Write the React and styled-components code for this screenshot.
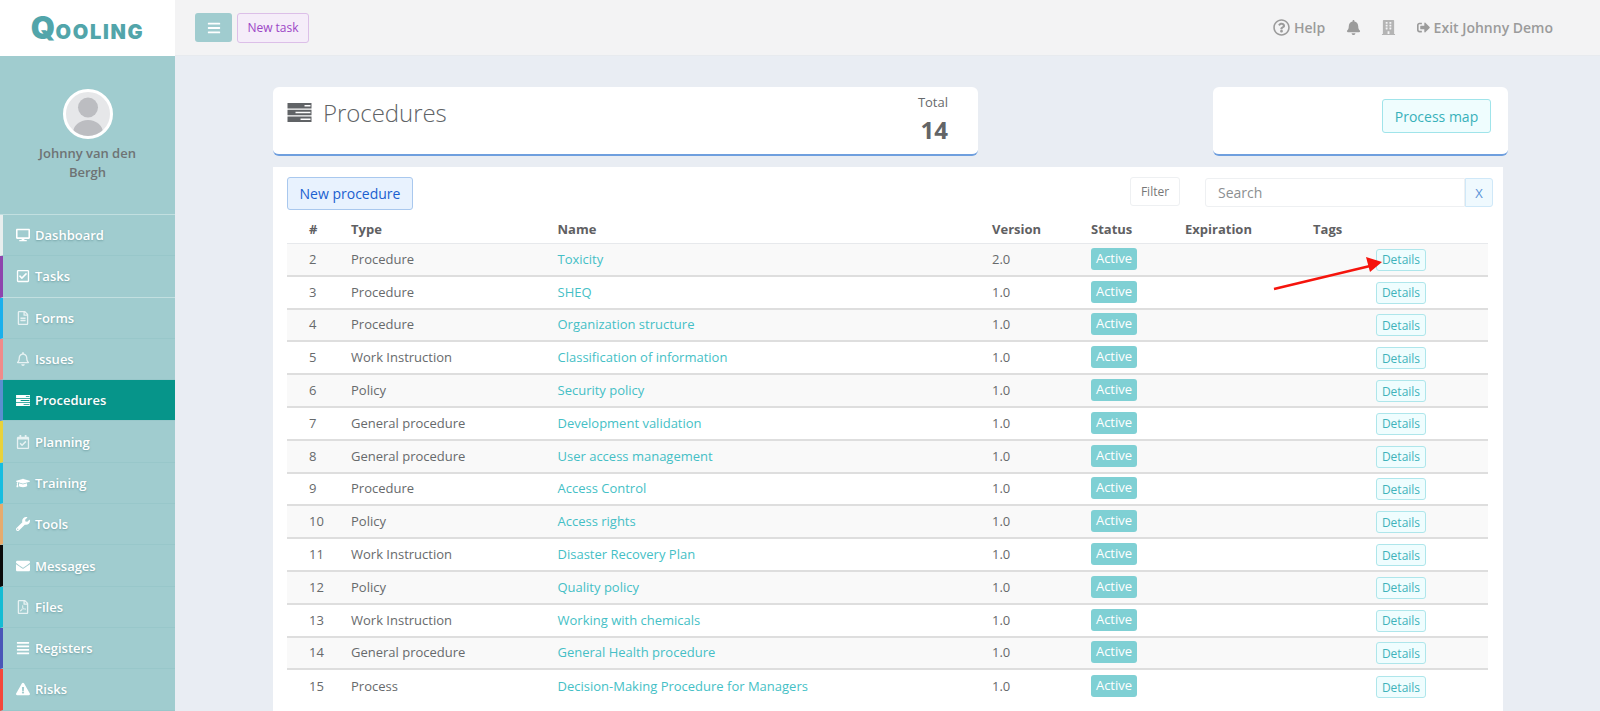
import styled, {createGlobalStyle} from 'styled-components'
import {
    FaDesktop, FaRegCheckSquare, FaRegFileAlt, FaRegBell, FaRegCalendarCheck,
    FaGraduationCap, FaWrench, FaEnvelope, FaRegFilePdf, FaAlignJustify, FaExclamationTriangle,
    FaRegQuestionCircle, FaBell, FaBuilding, FaSignOutAlt, FaBars
} from 'react-icons/fa'

const GlobalStyle = createGlobalStyle`
    html, body {
        margin: 0;
        height: 100%;
        overflow: hidden;
        background: #e9edf3;
        font-family: "Open Sans", sans-serif;
        font-size: 13px;
        color: #676a6c;
    }
    * { box-sizing: border-box; }
`

const Page = styled.div`
    display: grid;
    grid-template-columns: 175px 1fr;
    grid-template-rows: 56px 1fr;
    height: 711px;
    overflow: hidden;
`

const LogoBox = styled.div`
    background: #fff;
    display: flex;
    align-items: baseline;
    justify-content: center;
    padding-top: 12px;
    color: #52a5aa;
    font-family: Inter, sans-serif;
    font-weight: 900;
    font-size: 20px;
    letter-spacing: 1.7px;
    line-height: 32px;
    & span {
        font-size: 31px;
        letter-spacing: 0.5px;
    }
`

const TopBar = styled.header`
    background: #f3f3f4;
    border-bottom: 1px solid #e7eaee;
    display: flex;
    align-items: center;
    padding: 0 47px 0 20px;
    gap: 5px;
`

const MenuButton = styled.button`
    width: 37px;
    height: 29px;
    border: none;
    border-radius: 3px;
    background: #a0cccf;
    color: #fff;
    font-size: 14px;
    display: flex;
    align-items: center;
    justify-content: center;
    padding: 0;
`

const TaskButton = styled.button`
    width: 72px;
    height: 30px;
    border: 1px solid #dcbfe8;
    border-radius: 3px;
    background: #f5edf9;
    color: #9c45c6;
    font-family: inherit;
    font-size: 12px;
    padding: 0;
`

const TopLinks = styled.div`
    margin-left: auto;
    display: flex;
    align-items: center;
    color: #9b9b9b;
    font-size: 14px;
    font-weight: 600;
`

const TopLink = styled.span`
    display: flex;
    align-items: center;
    gap: ${props => props.$gap || 4}px;
    margin-left: ${props => props.$left || 0}px;
    color: ${props => props.$color || 'inherit'};
    & svg { font-size: ${props => props.$icon || 14}px; }
`

const Sidebar = styled.aside`
    background: #a0cccf;
    display: flex;
    flex-direction: column;
`

const Profile = styled.div`
    height: 159px;
    flex-shrink: 0;
    padding-top: 33px;
    display: flex;
    flex-direction: column;
    align-items: center;
    text-align: center;
    color: #6e7374;
    font-weight: 600;
    font-size: 13px;
    line-height: 19px;
    border-bottom: 1px solid #c2dfe0;
`

const Avatar = styled.div`
    width: 50px;
    height: 50px;
    border-radius: 50%;
    border: 3px solid #fff;
    background: #e6e7e9;
    overflow: hidden;
    margin-bottom: 5px;
    & svg { display: block; }
`

const ProfileName = styled.div`
    width: 120px;
`

const NavItem = styled.a`
    height: 41.3px;
    flex-shrink: 0;
    display: flex;
    align-items: center;
    padding-left: 13px;
    gap: 5px;
    color: #fff;
    font-weight: 600;
    font-size: 13px;
    text-shadow: 0 1px 2px rgba(60, 110, 115, 0.45);
    border-left: 3px solid ${props => props.$strip};
    background: ${props => props.$active ? '#06958a' : 'transparent'};
    border-bottom: 1px solid ${props => props.$light ? '#c2dfe0' : '#98c7ca'};
    & svg {
        width: 14px;
        font-size: 14px;
        flex-shrink: 0;
        opacity: ${props => props.$faint ? 0.75 : 1};
    }
`

const Main = styled.main`
    padding: 31px 92px 0 98px;
    min-width: 0;
`

const CardRow = styled.div`
    display: flex;
    justify-content: space-between;
`

const Card = styled.section`
    width: ${props => props.$width}px;
    height: 69px;
    background: #fff;
    border-radius: 6px;
    border-bottom: 2px solid #6f9fde;
    display: flex;
`

const TitleCard = styled(Card)`
    padding: 7px 30px 0 14px;
    justify-content: space-between;
`

const Title = styled.h1`
    margin: 0;
    height: 36px;
    display: flex;
    align-items: center;
    gap: 11px;
    font-size: 24px;
    font-weight: 300;
    letter-spacing: -0.05px;
    color: #606366;
    & svg { flex-shrink: 0; }
`

const Total = styled.div`
    display: flex;
    flex-direction: column;
    align-items: flex-end;
    font-size: 13px;
    line-height: 16px;
    & strong {
        font-size: 24px;
        font-weight: 700;
        line-height: 33px;
        margin-top: 3px;
        color: #636567;
    }
`

const MapCard = styled(Card)`
    padding: 12px 17px 0 0;
    justify-content: flex-end;
`

const MapButton = styled.button`
    width: 109px;
    height: 34px;
    border: 1px solid #a0e4ea;
    border-radius: 3px;
    background: #effdfe;
    color: #38b1ba;
    font-family: inherit;
    font-size: 14px;
    padding: 0;
`

const TablePanel = styled.section`
    position: relative;
    margin: 11px 5px 0 0;
    padding: 10px 10px 0 14px;
    background: #fff;
    height: 600px;
`

const Toolbar = styled.div`
    display: flex;
    align-items: flex-start;
    height: 36px;
`

const NewButton = styled.button`
    width: 126px;
    height: 33px;
    border: 1px solid #a9c8ee;
    border-radius: 3px;
    background: #e8f2fe;
    color: #1a5fd0;
    font-family: inherit;
    font-size: 14px;
    padding: 0;
    margin-right: auto;
`

const FilterButton = styled.button`
    width: 50px;
    height: 29px;
    border: 1px solid #eef0f2;
    border-radius: 3px;
    background: #fff;
    color: #777;
    font-family: inherit;
    font-size: 12px;
    padding: 0;
    margin-right: 25px;
`

const SearchInput = styled.input`
    width: 260px;
    height: 29px;
    margin-top: 1px;
    border: 1px solid #eef0f2;
    border-radius: 3px 0 0 3px;
    padding: 0 12px;
    font-family: inherit;
    font-size: 14px;
    outline: none;
    &::placeholder { color: #8c8f91; }
`

const ClearButton = styled.button`
    width: 28px;
    height: 29px;
    margin-top: 1px;
    border: 1px solid #cfe8f8;
    border-radius: 0 3px 3px 0;
    background: #eff9fe;
    color: #5b93d8;
    font-family: inherit;
    font-size: 13px;
    padding: 0;
`

const Row = styled.div`
    display: grid;
    grid-template-columns: 56px 206.5px 434.5px 99px 94px 128px 63px 120px;
    align-items: center;
    margin-right: 5px;
    height: 32.8px;
    background: ${props => props.$shaded ? '#f9f9f9' : '#fff'};
    border-bottom: 2px solid #dedede;
    &:last-of-type { border-bottom: none; }
`

const HeadRow = styled(Row)`
    height: 31px;
    padding-top: 2px;
    border-bottom: 1px solid #e7e9ec;
    font-weight: 700;
    color: #5f6062;
`

const Cell = styled.div`
    padding-left: ${props => props.$first ? 22 : 8}px;
    padding-bottom: 1px;
    white-space: nowrap;
`

const NameLink = styled.a`
    color: #45bfc6;
`

const Badge = styled.span`
    display: inline-block;
    width: 46px;
    height: 22px;
    line-height: 21px;
    text-align: center;
    border-radius: 3px;
    background: #7fd0d4;
    color: #fff;
`

const DetailsButton = styled.button`
    display: block;
    width: 50px;
    height: 22px;
    border: 1px solid #aee6eb;
    border-radius: 3px;
    background: #effdfe;
    color: #3fb3bb;
    font-family: inherit;
    font-size: 12px;
    padding: 0;
    margin-top: 2px;
`

const Arrow = styled.svg`
    position: absolute;
    left: 1000px;
    top: 90px;
    pointer-events: none;
`

// bars with a white slit, the sidebar and title use the same drawing
function ProcedureIcon({width, height}) {
    return (
        <svg width={width} height={height} viewBox="0 0 24 19" fill="currentColor" fillRule="evenodd">
            <path d="M0 0h24v5.5H0zM17 2v1.6h6V2z" />
            <path d="M0 6.7h24v5.5H0zM8 8.7v1.6h15V8.7z" />
            <path d="M0 13.4h24v5.5H0zM13 15.4v1.6h10v-1.6z" />
        </svg>
    )
}

const SmallProcedureIcon = () => <ProcedureIcon width={14} height={11} />

const navItems = [
    {label: 'Dashboard', icon: FaDesktop, strip: '#e8eeee'},
    {label: 'Tasks', icon: FaRegCheckSquare, strip: '#8e44ad', light: true},
    {label: 'Forms', icon: FaRegFileAlt, strip: '#1ab0ec', faint: true},
    {label: 'Issues', icon: FaRegBell, strip: '#f08a8a', faint: true},
    {label: 'Procedures', icon: SmallProcedureIcon, strip: '#5b8fcf', active: true},
    {label: 'Planning', icon: FaRegCalendarCheck, strip: '#e8d23c', faint: true},
    {label: 'Training', icon: FaGraduationCap, strip: '#17bde0'},
    {label: 'Tools', icon: FaWrench, strip: '#e6ab6e'},
    {label: 'Messages', icon: FaEnvelope, strip: '#0a0a0a'},
    {label: 'Files', icon: FaRegFilePdf, strip: '#14bcd4', faint: true},
    {label: 'Registers', icon: FaAlignJustify, strip: '#4a55b8'},
    {label: 'Risks', icon: FaExclamationTriangle, strip: '#f4473c'},
]

const procedures = [
    [2, 'Procedure', 'Toxicity', '2.0'],
    [3, 'Procedure', 'SHEQ', '1.0'],
    [4, 'Procedure', 'Organization structure', '1.0'],
    [5, 'Work Instruction', 'Classification of information', '1.0'],
    [6, 'Policy', 'Security policy', '1.0'],
    [7, 'General procedure', 'Development validation', '1.0'],
    [8, 'General procedure', 'User access management', '1.0'],
    [9, 'Procedure', 'Access Control', '1.0'],
    [10, 'Policy', 'Access rights', '1.0'],
    [11, 'Work Instruction', 'Disaster Recovery Plan', '1.0'],
    [12, 'Policy', 'Quality policy', '1.0'],
    [13, 'Work Instruction', 'Working with chemicals', '1.0'],
    [14, 'General procedure', 'General Health procedure', '1.0'],
    [15, 'Process', 'Decision-Making Procedure for Managers', '1.0'],
]

function App() {
    return (
        <>
            <GlobalStyle />
            <Page>
                <LogoBox><span>Q</span>OOLING</LogoBox>
                <TopBar>
                    <MenuButton><FaBars /></MenuButton>
                    <TaskButton>New task</TaskButton>
                    <TopLinks>
                        <TopLink $icon={17}><FaRegQuestionCircle />Help</TopLink>
                        <TopLink $left={21} $icon={15}><FaBell /></TopLink>
                        <TopLink $left={19.5} $color="#b4b4b4" $icon={15}><FaBuilding /></TopLink>
                        <TopLink $left={21} $icon={13}><FaSignOutAlt />Exit Johnny Demo</TopLink>
                    </TopLinks>
                </TopBar>
                <Sidebar>
                    <Profile>
                        <Avatar>
                            <svg width="44" height="44" viewBox="0 0 44 44">
                                <circle cx="22" cy="15.5" r="10" fill="#bcbdc1" />
                                <ellipse cx="22" cy="41" rx="15" ry="13" fill="#bcbdc1" />
                            </svg>
                        </Avatar>
                        <ProfileName>Johnny van den Bergh</ProfileName>
                    </Profile>
                    {navItems.map(item => (
                        <NavItem key={item.label} $strip={item.strip} $active={item.active} $light={item.light} $faint={item.faint}>
                            <item.icon />{item.label}
                        </NavItem>
                    ))}
                </Sidebar>
                <Main>
                    <CardRow>
                        <TitleCard $width={705}>
                            <Title><ProcedureIcon width={25} height={19} />Procedures</Title>
                            <Total>Total<strong>14</strong></Total>
                        </TitleCard>
                        <MapCard $width={295}>
                            <MapButton>Process map</MapButton>
                        </MapCard>
                    </CardRow>
                    <TablePanel>
                        <Toolbar>
                            <NewButton>New procedure</NewButton>
                            <FilterButton>Filter</FilterButton>
                            <SearchInput placeholder="Search" />
                            <ClearButton>X</ClearButton>
                        </Toolbar>
                        <HeadRow>
                            <Cell $first>#</Cell>
                            <Cell>Type</Cell>
                            <Cell>Name</Cell>
                            <Cell>Version</Cell>
                            <Cell>Status</Cell>
                            <Cell>Expiration</Cell>
                            <Cell>Tags</Cell>
                            <Cell />
                        </HeadRow>
                        {procedures.map(([id, type, name, version], i) => (
                            <Row key={id} $shaded={i % 2 === 0}>
                                <Cell $first>{id}</Cell>
                                <Cell>{type}</Cell>
                                <Cell><NameLink>{name}</NameLink></Cell>
                                <Cell>{version}</Cell>
                                <Cell><Badge>Active</Badge></Cell>
                                <Cell />
                                <Cell />
                                <Cell><DetailsButton>Details</DetailsButton></Cell>
                            </Row>
                        ))}
                        <Arrow width="112" height="40" viewBox="0 0 112 40">
                            <line x1="1" y1="32" x2="97" y2="9" stroke="#f5140c" strokeWidth="2.4" />
                            <polygon points="109,5 93,0 97,15" fill="#f5140c" />
                        </Arrow>
                    </TablePanel>
                </Main>
            </Page>
        </>
    )
}

export default App
